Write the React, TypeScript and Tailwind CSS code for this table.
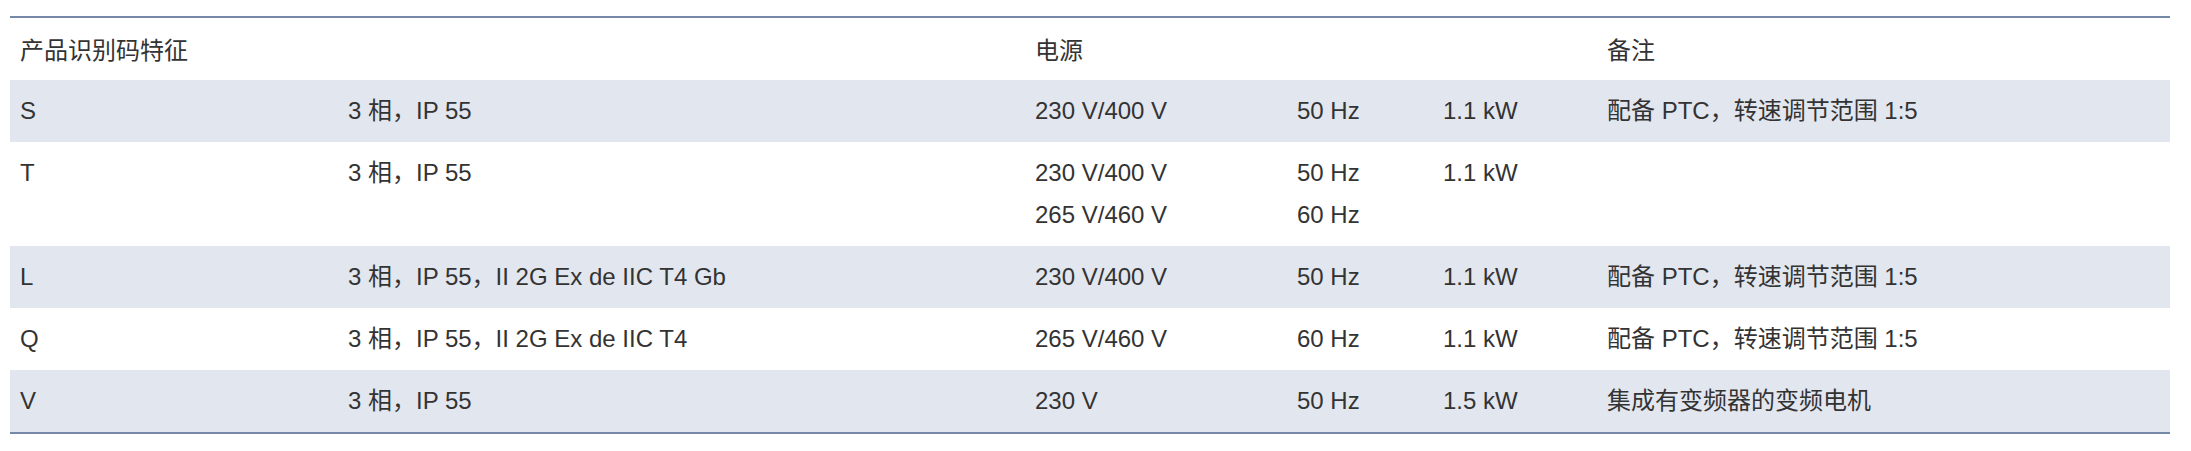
const rows = [
  { code: "S", spec: "3 相，IP 55", volt: ["230 V/400 V"], hz: ["50 Hz"], kw: "1.1 kW", note: "配备 PTC，转速调节范围 1:5", shade: true },
  { code: "T", spec: "3 相，IP 55", volt: ["230 V/400 V", "265 V/460 V"], hz: ["50 Hz", "60 Hz"], kw: "1.1 kW", note: "", shade: false },
  { code: "L", spec: "3 相，IP 55，II 2G Ex de IIC T4 Gb", volt: ["230 V/400 V"], hz: ["50 Hz"], kw: "1.1 kW", note: "配备 PTC，转速调节范围 1:5", shade: true },
  { code: "Q", spec: "3 相，IP 55，II 2G Ex de IIC T4", volt: ["265 V/460 V"], hz: ["60 Hz"], kw: "1.1 kW", note: "配备 PTC，转速调节范围 1:5", shade: false },
  { code: "V", spec: "3 相，IP 55", volt: ["230 V"], hz: ["50 Hz"], kw: "1.5 kW", note: "集成有变频器的变频电机", shade: true },
];

const cell = "px-[10px] py-[10px] align-top text-left font-normal";
const head = "px-[10px] pt-[12px] pb-[8px] align-top text-left font-normal";

export default function App() {
  return (
    <div className="bg-white w-[2191px] h-[451px] pt-[16px] pl-[10px] text-[#333333] text-[24px] leading-[42px] [font-family:'Liberation_Sans','Noto_Sans_CJK_SC',sans-serif]">
      <table className="w-[2160px] table-fixed border-collapse border-t-2 border-b-2 border-[#7789a9]">
        <colgroup>
          <col className="w-[328px]" />
          <col className="w-[687px]" />
          <col className="w-[262px]" />
          <col className="w-[146px]" />
          <col className="w-[164px]" />
          <col />
        </colgroup>
        <thead>
          <tr>
            <th className={head}>产品识别码特征</th>
            <th className={head}></th>
            <th className={head}>电源</th>
            <th className={head}></th>
            <th className={head}></th>
            <th className={head}>备注</th>
          </tr>
        </thead>
        <tbody>
          {rows.map((r) => (
            <tr key={r.code} className={r.shade ? "bg-[#e2e6ef]" : "bg-white"}>
              <td className={cell}>{r.code}</td>
              <td className={cell}>{r.spec}</td>
              <td className={cell}>
                {r.volt.map((v) => (
                  <div key={v}>{v}</div>
                ))}
              </td>
              <td className={cell}>
                {r.hz.map((h) => (
                  <div key={h}>{h}</div>
                ))}
              </td>
              <td className={cell}>{r.kw}</td>
              <td className={cell}>{r.note}</td>
            </tr>
          ))}
        </tbody>
      </table>
    </div>
  );
}
